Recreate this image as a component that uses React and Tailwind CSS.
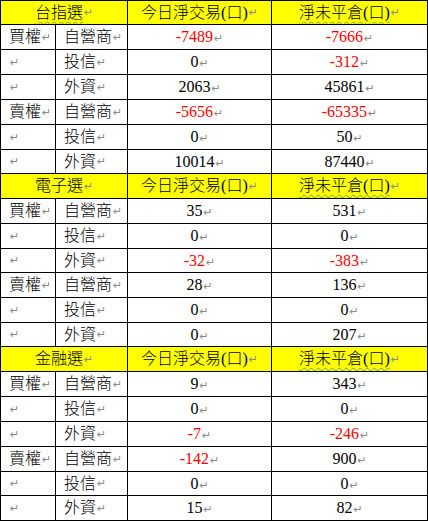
const sections = [
  {
    name: '台指選',
    underline: true,
    heights: ['h-[24px]', 'h-[25px]', 'h-[25px]', 'h-[25px]', 'h-[25px]', 'h-[25px]', 'h-[24px]'],
    rows: [
      ['買權', '自營商', '-7489', '-7666'],
      ['', '投信', '0', '-312'],
      ['', '外資', '2063', '45861'],
      ['賣權', '自營商', '-5656', '-65335'],
      ['', '投信', '0', '50'],
      ['', '外資', '10014', '87440'],
    ],
  },
  {
    name: '電子選',
    underline: false,
    heights: ['h-[25px]', 'h-[25px]', 'h-[25px]', 'h-[24px]', 'h-[25px]', 'h-[25px]', 'h-[24px]'],
    rows: [
      ['買權', '自營商', '35', '531'],
      ['', '投信', '0', '0'],
      ['', '外資', '-32', '-383'],
      ['賣權', '自營商', '28', '136'],
      ['', '投信', '0', '0'],
      ['', '外資', '0', '207'],
    ],
  },
  {
    name: '金融選',
    underline: false,
    heights: ['h-[25px]', 'h-[25px]', 'h-[25px]', 'h-[25px]', 'h-[25px]', 'h-[24px]', 'h-[25px]'],
    rows: [
      ['買權', '自營商', '9', '343'],
      ['', '投信', '0', '0'],
      ['', '外資', '-7', '-246'],
      ['賣權', '自營商', '-142', '900'],
      ['', '投信', '0', '0'],
      ['', '外資', '15', '82'],
    ],
  },
]

const Mark = () => (
  <span className="text-[11px] text-[#8a8a8a] font-['DejaVu_Sans'] font-normal leading-none ml-[1px]">↵</span>
)

const Num = ({ value }) => (
  <span className={value.startsWith('-') ? 'text-[#ff0000]' : 'text-black'}>
    {value}
    <Mark />
  </span>
)

const cell = 'border-l border-t border-black flex items-center'

const App = () => {
  return (
    <div className="w-[428px] bg-white font-['Liberation_Serif','Noto_Sans_CJK_TC',serif] font-light text-[16px] leading-none text-black">
      <div className="border-r border-b border-black">
        {sections.map((sec) => (
          <div key={sec.name}>
            <div className={`grid grid-cols-[127px_144px_156px] bg-[#ffff00] ${sec.heights[0]}`}>
              <div className={`${cell} justify-center`}>
                <span className={sec.underline ? 'underline decoration-wavy decoration-[#6aa84f] underline-offset-[3px] decoration-1' : ''}>
                  {sec.name}
                </span>
                <Mark />
              </div>
              <div className={`${cell} justify-center`}>
                今日淨交易(口)
                <Mark />
              </div>
              <div className={`${cell} justify-center`}>
                <span className="underline decoration-wavy decoration-[#6aa84f] underline-offset-[3px] decoration-1">
                  淨未平倉(口)
                </span>
                <Mark />
              </div>
            </div>
            {sec.rows.map((r, i) => (
              <div key={i} className={`grid grid-cols-[55px_72px_144px_156px] ${sec.heights[i + 1]}`}>
                <div className={`${cell} pl-2`}>
                  {r[0]}
                  <Mark />
                </div>
                <div className={`${cell} pl-2`}>
                  {r[1]}
                  <Mark />
                </div>
                <div className={`${cell} justify-center`}>
                  <Num value={r[2]} />
                </div>
                <div className={`${cell} justify-center`}>
                  <Num value={r[3]} />
                </div>
              </div>
            ))}
          </div>
        ))}
      </div>
    </div>
  )
}

export default App
